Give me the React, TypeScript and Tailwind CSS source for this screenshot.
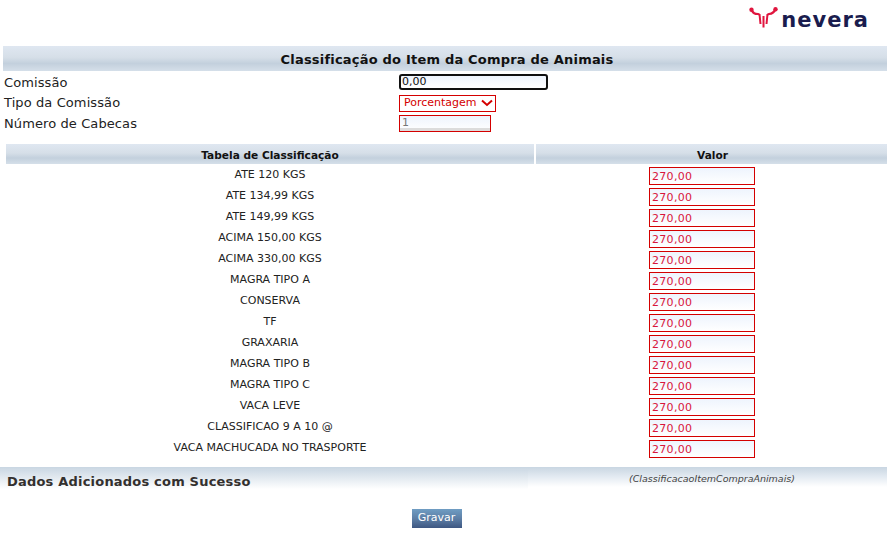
const ROWS = [
  "ATE 120 KGS",
  "ATE 134,99 KGS",
  "ATE 149,99 KGS",
  "ACIMA 150,00 KGS",
  "ACIMA 330,00 KGS",
  "MAGRA TIPO A",
  "CONSERVA",
  "TF",
  "GRAXARIA",
  "MAGRA TIPO B",
  "MAGRA TIPO C",
  "VACA LEVE",
  "CLASSIFICAO 9 A 10 @",
  "VACA MACHUCADA NO TRASPORTE",
];

const headerBg =
  "bg-[linear-gradient(180deg,#dfe7f1_0%,#d6dfe8_45%,#c3d0dd_70%,#d5dfe9_100%)]";
const inputBg = "bg-[linear-gradient(180deg,#eef4fd_0%,#ffffff_100%)]";

function Logo() {
  return (
    <div className="flex items-start gap-[3px]">
      <svg width="29" height="21" viewBox="0 0 29 21" fill="none">
        <path d="M2.5 2.5 C4 6.5 6 6.8 9 7 L10.5 7.5 M26.5 2 C25 6 23 6.8 20 7 L18.5 7.5" stroke="#e0163f" strokeWidth="2.2" />
        <circle cx="2.5" cy="2.8" r="2.2" fill="#e0163f" />
        <circle cx="26.5" cy="2.2" r="2.2" fill="#e0163f" />
        <path d="M10.5 7 L11.5 17 M14.5 9 V20.5 M18.5 7 L17.5 17" stroke="#e0163f" strokeWidth="2" />
      </svg>
      <span className="mt-[1px] font-['DejaVu_Sans',sans-serif] text-[21px] font-bold leading-[24px] tracking-[1px] text-[#1a1c4e]">
        nevera
      </span>
    </div>
  );
}

function FormRow({ label, children, h }: { label: string; children: React.ReactNode; h: string }) {
  return (
    <div className={`flex items-center ${h}`}>
      <div className="w-[399px] pl-[4px] text-[13px] tracking-[0.1px] text-[#222]">{label}</div>
      {children}
    </div>
  );
}

export default function App() {
  return (
    <div className="h-[536px] w-[887px] overflow-hidden bg-white font-['DejaVu_Sans',Verdana,sans-serif]">
      <div className="flex h-[46px] justify-end pr-[18px] pt-[7px]">
        <Logo />
      </div>

      <div className={`ml-[3px] flex h-[25px] items-center justify-center pl-[4px] pt-[2px] text-[13px] font-bold tracking-[0.2px] text-[#111] ${headerBg}`}>
        Classificação do Item da Compra de Animais
      </div>

      <div className="flex flex-col pt-[1px]">
        <FormRow label="Comissão" h="h-[21px]">
          <div className={`mb-[1px] flex h-[16px] w-[149px] items-center rounded-[3px] border-2 border-[#101010] pl-[1px] text-[11px] text-[#111] ${inputBg}`}>
            0,00
          </div>
        </FormRow>
        <FormRow label="Tipo da Comissão" h="h-[20px]">
          <div className="flex h-[17px] w-[97px] items-center justify-between border border-[#d40000] pl-[4px] pr-[2px] text-[11px] text-[#d40000]">
            Porcentagem
            <svg width="12" height="8" viewBox="0 0 12 8" fill="none">
              <path d="M1 1.5 L6 6 L11 1.5" stroke="#d40000" strokeWidth="2" />
            </svg>
          </div>
        </FormRow>
        <FormRow label="Número de Cabecas" h="h-[21px]">
          <div className={`flex h-[17px] w-[92px] items-center border border-[#d40000] pl-[2px] text-[11px] text-[#777] shadow-[inset_0_-3px_0_#dcdcdc] ${inputBg}`}>
            1
          </div>
        </FormRow>
      </div>

      <div className="ml-[6px] mt-[10px] flex gap-[2px] text-[10.6px] font-bold text-[#111]">
        <div className={`flex h-[20px] w-[528px] items-center justify-center pt-[3px] ${headerBg}`}>
          Tabela de Classificação
        </div>
        <div className={`flex h-[20px] flex-1 items-center justify-center pl-[2px] pt-[3px] ${headerBg}`}>Valor</div>
      </div>

      <div className="ml-[6px] mt-[3px] flex flex-col">
        {ROWS.map((name) => (
          <div key={name} className="flex h-[21px]">
            <div className="h-[16px] w-[530px] pr-[2px] pt-[1px] text-center text-[11px] leading-[14px] text-[#222]">{name}</div>
            <div className="flex flex-1 pl-[113px]">
              <div className={`flex h-[18px] w-[106px] items-center border border-[#d40000] pl-[2px] pt-[3px] text-[11px] tracking-[0.3px] text-[#d8163c] ${inputBg}`}>
                270,00
              </div>
            </div>
          </div>
        ))}
      </div>

      <div className="mt-[6px] flex h-[20px] bg-[linear-gradient(180deg,#c9d6e2_0%,#e4ebf2_50%,#ffffff_100%)]">
        <div className="mt-[3px] flex h-[19px] w-[528px] items-center bg-[linear-gradient(180deg,#cfdbe6_0%,#ffffff_100%)] pl-[7px] pt-[4px] text-[13px] font-bold tracking-[0.2px] text-[#33302e]">
          Dados Adicionados com Sucesso
        </div>
        <div className="flex-1 pl-[101px] pt-[5px] text-[9.5px] italic text-[#444]">(ClassificacaoItemCompraAnimais)</div>
      </div>

      <div className="mt-[22px] flex justify-center pr-[14px]">
        <div className="flex h-[19px] w-[50px] items-center justify-center bg-[linear-gradient(180deg,#6f9dc3_0%,#5d7fa6_50%,#3e5782_100%)] text-[11px] text-white">
          Gravar
        </div>
      </div>
    </div>
  );
}
